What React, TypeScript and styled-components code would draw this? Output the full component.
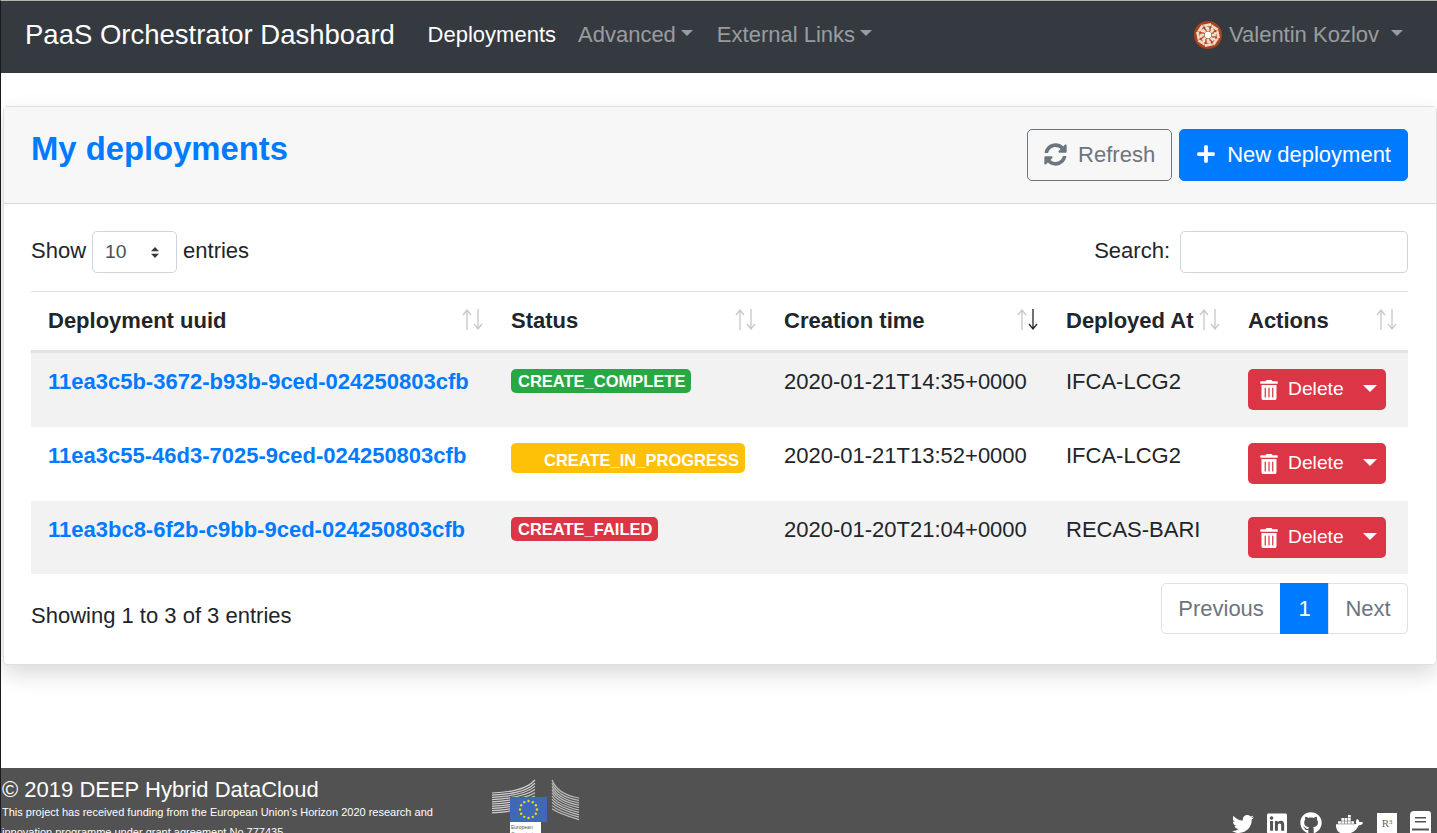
import React from 'react';
import styled, { createGlobalStyle } from 'styled-components';
import { FaSyncAlt, FaPlus, FaTrashAlt, FaTwitter, FaLinkedin, FaGithub, FaDocker } from 'react-icons/fa';

const GlobalStyle = createGlobalStyle`
  html, body {
    margin: 0;
    height: 833px;
    overflow: hidden;
    background: #fff;
  }
  body {
    font-family: "Liberation Sans", Arial, sans-serif;
    font-size: 22px;
    line-height: 1.5;
    color: #212529;
  }
  * { box-sizing: border-box; }
`;

const Page = styled.div`
  display: flex;
  flex-direction: column;
  height: 833px;
  border-top: 1px solid #b8b4ae;
  border-left: 1px solid #1a1a1a;
  overflow: hidden;
`;

const Navbar = styled.nav`
  display: flex;
  align-items: center;
  height: 72px;
  flex-shrink: 0;
  padding: 0 34px 5px 24px;
  background: #343a40;
`;

const Brand = styled.a`
  font-size: 27.5px;
  color: #fff;
  margin-right: 21.7px;
  white-space: nowrap;
`;

const NavLink = styled.a<{ $active?: boolean }>`
  display: inline-flex;
  align-items: center;
  padding: 0 11px;
  white-space: nowrap;
  color: ${(p) => (p.$active ? '#fff' : 'rgba(255, 255, 255, 0.5)')};
  & + & + & {
    margin-left: 2px;
  }
`;

const Caret = styled.span<{ $gap?: number; $size?: number }>`
  display: inline-block;
  margin-left: ${(p) => p.$gap ?? 5}px;
  margin-top: -3px;
  border-top: ${(p) => p.$size ?? 6}px solid currentColor;
  border-left: ${(p) => p.$size ?? 6}px solid transparent;
  border-right: ${(p) => p.$size ?? 6}px solid transparent;
`;

const NavRight = styled.div`
  margin-left: auto;
  display: flex;
  align-items: center;
`;

const UserName = styled.span`
  color: rgba(255, 255, 255, 0.5);
  display: inline-flex;
  align-items: center;
  white-space: nowrap;
`;

const AvatarSvg = styled.svg`
  width: 28px;
  height: 28px;
  margin-right: 7px;
`;

const Main = styled.main`
  flex: 1;
  padding: 33px 0 0 2px;
`;

const Card = styled.section`
  height: 559px;
  background: #fff;
  border: 1px solid rgba(0, 0, 0, 0.125);
  border-radius: 5px;
  box-shadow: 0 9px 22px rgba(0, 0, 0, 0.15);
`;

const CardHeader = styled.header`
  display: flex;
  justify-content: space-between;
  align-items: flex-start;
  height: 97px;
  padding: 22px 28px 0 27px;
  background: #f7f7f7;
  border-bottom: 1px solid rgba(0, 0, 0, 0.125);
`;

const Title = styled.h3`
  margin: 0;
  font-size: 32.8px;
  line-height: 40px;
  font-weight: 700;
  color: #007bff;
`;

const HeaderActions = styled.div`
  display: flex;
  gap: 7px;
`;

const Button = styled.button<{ $variant: 'outline' | 'primary' }>`
  display: inline-flex;
  align-items: center;
  gap: 11px;
  height: 52px;
  padding: 0 16px 2px;
  font: inherit;
  border-radius: 5px;
  border: 1px solid ${(p) => (p.$variant === 'primary' ? '#007bff' : '#6c757d')};
  background: ${(p) => (p.$variant === 'primary' ? '#007bff' : 'transparent')};
  color: ${(p) => (p.$variant === 'primary' ? '#fff' : '#6c757d')};
`;

const CardBody = styled.div`
  padding: 27px 28px 0 27px;
`;

const Controls = styled.div`
  display: flex;
  justify-content: space-between;
  align-items: center;
  height: 42px;
  margin-bottom: 18px;
`;

const ControlLabel = styled.label`
  display: flex;
  align-items: flex-start;
  gap: 6px;
  line-height: 40px;
`;

const FakeSelect = styled.div`
  display: flex;
  align-items: center;
  justify-content: space-between;
  width: 85px;
  height: 42px;
  padding: 0 17px 0 12px;
  font-size: 19.25px;
  color: #495057;
  border: 1px solid #ced4da;
  border-radius: 5px;
`;

const SearchInput = styled.input`
  width: 228px;
  height: 42px;
  margin-left: 4px;
  border: 1px solid #ced4da;
  border-radius: 5px;
`;

const Table = styled.table`
  width: 100%;
  table-layout: fixed;
  border-collapse: separate;
  border-spacing: 0;
`;

const HeadCell = styled.th`
  position: relative;
  height: 62px;
  padding: 0 17px 2px;
  text-align: left;
  font-weight: 700;
  white-space: nowrap;
  border-top: 1px solid #dee2e6;
  border-bottom: 3px solid #dee2e6;
`;

const SortIcon = styled.svg`
  position: absolute;
  top: 17px;
  right: 11px;
  width: 21px;
  height: 21px;
  overflow: visible;
`;

const Row = styled.tr<{ $striped?: boolean }>`
  height: 74px;
  background: ${(p) => (p.$striped ? '#f2f2f2' : '#fff')};
  & + & td {
    border-top-color: #dee2e6;
  }
  &:last-child {
    height: 73px;
  }
`;

const Cell = styled.td`
  padding: 11px 17px 0;
  vertical-align: top;
  white-space: nowrap;
  border-top: 1px solid transparent;
`;

const UuidLink = styled.a`
  font-weight: 700;
  color: #007bff;
`;

const Badge = styled.span<{ $tone: 'success' | 'warning' | 'danger'; $lead?: number }>`
  display: block;
  width: fit-content;
  margin-top: 4px;
  padding: 0 6px 0 ${(p) => p.$lead ?? 7}px;
  height: ${(p) => (p.$lead ? 30 : 24)}px;
  line-height: ${(p) => (p.$lead ? 34 : 24)}px;
  font-size: 16.5px;
  font-weight: 700;
  color: #fff;
  border-radius: 5px;
  background: ${(p) =>
    p.$tone === 'success' ? '#28a745' : p.$tone === 'warning' ? '#ffc107' : '#dc3545'};
`;

const DeleteGroup = styled.div`
  display: flex;
  align-items: center;
  justify-content: space-between;
  width: 138px;
  height: 41px;
  margin-top: 4px;
  padding: 0 9px 0 11px;
  font-size: 19.25px;
  color: #fff;
  background: #dc3545;
  border-radius: 5px;
`;

const DeleteLabel = styled.span`
  display: inline-flex;
  align-items: center;
  gap: 9px;
`;

const TableFooter = styled.div`
  display: flex;
  justify-content: space-between;
  align-items: flex-start;
  margin-top: 9px;
`;

const InfoText = styled.div`
  padding-top: 16px;
`;

const Pagination = styled.ul`
  display: flex;
  height: 51px;
  margin: 0;
  padding: 0;
  list-style: none;
`;

const PageItem = styled.li<{ $active?: boolean }>`
  display: flex;
  align-items: center;
  justify-content: center;
  min-width: ${(p) => (p.$active ? '49px' : '0')};
  padding: 0 16.3px;
  margin-left: -1px;
  color: ${(p) => (p.$active ? '#fff' : '#6c757d')};
  background: ${(p) => (p.$active ? '#007bff' : '#fff')};
  border: 1px solid ${(p) => (p.$active ? '#007bff' : '#dee2e6')};
  &:first-child {
    border-radius: 5px 0 0 5px;
  }
  &:last-child {
    border-radius: 0 5px 5px 0;
  }
`;

const Footer = styled.footer`
  display: flex;
  flex-shrink: 0;
  height: 65px;
  padding-left: 1px;
  background: #525252;
  color: #fff;
  overflow: hidden;
`;

const FooterText = styled.div`
  width: 488px;
  flex-shrink: 0;
`;

const Copyright = styled.div`
  font-size: 22px;
  line-height: 25px;
  margin-top: 9px;
`;

const FundingNote = styled.div`
  width: 440px;
  font-size: 11px;
  line-height: 20px;
`;

const EuSvg = styled.svg`
  width: 90px;
  height: 65px;
  margin-top: 10px;
  flex-shrink: 0;
`;

const Socials = styled.div`
  display: flex;
  align-items: flex-start;
  margin-left: auto;
  padding: 43px 6px 0 0;
`;

const SocialIcon = styled.span<{ $width: number; $gap?: number; $top?: number }>`
  display: flex;
  justify-content: center;
  width: ${(p) => p.$width}px;
  margin-left: ${(p) => p.$gap ?? 14}px;
  margin-top: ${(p) => p.$top ?? 0}px;
`;

const R3Box = styled.span`
  display: flex;
  align-items: center;
  justify-content: center;
  width: 20px;
  height: 20px;
  margin: 2px 0 0 14px;
  background: #fff;
  color: #6a6a6a;
  font-family: "Liberation Serif", serif;
  font-size: 11px;
  line-height: 1;
`;

const BookSvg = styled.svg`
  width: 21px;
  height: 24px;
  margin-left: 13px;
`;

const rows = [
  { uuid: '11ea3c5b-3672-b93b-9ced-024250803cfb', status: 'CREATE_COMPLETE', tone: 'success', time: '2020-01-21T14:35+0000', site: 'IFCA-LCG2' },
  { uuid: '11ea3c55-46d3-7025-9ced-024250803cfb', status: 'CREATE_IN_PROGRESS', tone: 'warning', lead: 33, time: '2020-01-21T13:52+0000', site: 'IFCA-LCG2' },
  { uuid: '11ea3bc8-6f2b-c9bb-9ced-024250803cfb', status: 'CREATE_FAILED', tone: 'danger', time: '2020-01-20T21:04+0000', site: 'RECAS-BARI' },
] as const;

const columns = [
  { label: 'Deployment uuid', width: 463 },
  { label: 'Status', width: 273 },
  { label: 'Creation time', width: 282, sorted: true },
  { label: 'Deployed At', width: 182 },
  { label: 'Actions', width: 177 },
];

function SortArrows({ sorted }: { sorted?: boolean }) {
  return (
    <SortIcon viewBox="0 0 21 21" fill="none" stroke="#212529" strokeWidth="1.3">
      <path d="M5 21 V1 M1 6 L5 1 L9 6" opacity="0.25" />
      <path d="M16 0 V20 M12 15 L16 20 L20 15" opacity={sorted ? 1 : 0.25} />
    </SortIcon>
  );
}

function Avatar() {
  const spokes = [0, 45, 90, 135, 180, 225, 270, 315];
  return (
    <AvatarSvg viewBox="0 0 28 28">
      <circle cx="14" cy="14" r="14" fill="#a8431a" />
      <circle cx="14" cy="14" r="3.4" fill="#fff" />
      {spokes.map((a) => (
        <g key={a} transform={`rotate(${a} 14 14)`}>
          <rect x="12.6" y="6.2" width="2.8" height="3.8" fill="#f3d9c8" />
          <path d="M8.5 3.8 L17 2 L17 5 L11 6 Z" fill="#f3d9c8" />
          <circle cx="18" cy="8" r="1.4" fill="#f8e8dd" />
        </g>
      ))}
    </AvatarSvg>
  );
}

function EuLogo() {
  const stripes = Array.from({ length: 10 }, (_, i) => i);
  const stars = Array.from({ length: 12 }, (_, i) => (i * Math.PI) / 6);
  return (
    <EuSvg viewBox="0 0 90 65">
      {stripes.map((i) => (
        <path key={i} d={`M2 ${15 + i * 2.2} C 20 ${14 + i * 2.2}, 36 ${12 + i * 2}, 45 ${2 + i * 3.2}`} stroke="#cfcfcf" strokeWidth="1.2" fill="none" />
      ))}
      {stripes.map((i) => (
        <path key={`r${i}`} d={`M62 ${2 + i * 3.2} C 66 ${12 + i * 2.4}, 76 ${18 + i * 2.2}, 89 ${20 + i * 2.4}`} stroke="#bdbdbd" strokeWidth="1.2" fill="none" />
      ))}
      <rect x="20" y="19" width="37" height="25" fill="#3f68b5" />
      <rect x="20" y="44" width="31" height="21" fill="#fff" />
      {stars.map((t) => (
        <circle key={t} cx={38.5 + Math.cos(t) * 8.5} cy={31.5 + Math.sin(t) * 8.5} r="1.2" fill="#f5d90a" />
      ))}
      <text x="21" y="51" fontSize="5" fill="#555" fontFamily="Liberation Sans, sans-serif">European</text>
      <text x="21" y="58" fontSize="5" fill="#555" fontFamily="Liberation Sans, sans-serif">Commission</text>
    </EuSvg>
  );
}

function SelectArrows() {
  return (
    <svg width="8" height="11" viewBox="0 0 8 11">
      <path d="M4 0 L8 4.3 H0 Z M4 11 L0 6.7 H8 Z" fill="#343a40" />
    </svg>
  );
}

export default function App() {
  return (
    <>
      <GlobalStyle />
      <Page>
        <Navbar>
          <Brand>PaaS Orchestrator Dashboard</Brand>
          <NavLink $active>Deployments</NavLink>
          <NavLink>Advanced<Caret /></NavLink>
          <NavLink>External Links<Caret /></NavLink>
          <NavRight>
            <Avatar />
            <UserName>Valentin Kozlov<Caret $gap={12} /></UserName>
          </NavRight>
        </Navbar>

        <Main>
          <Card>
            <CardHeader>
              <Title>My deployments</Title>
              <HeaderActions>
                <Button $variant="outline"><FaSyncAlt size={23} />Refresh</Button>
                <Button $variant="primary"><FaPlus size={20} />New deployment</Button>
              </HeaderActions>
            </CardHeader>
            <CardBody>
              <Controls>
                <ControlLabel>
                  Show
                  <FakeSelect>10<SelectArrows /></FakeSelect>
                  entries
                </ControlLabel>
                <ControlLabel>
                  Search:
                  <SearchInput />
                </ControlLabel>
              </Controls>

              <Table>
                <colgroup>
                  {columns.map((c) => (
                    <col key={c.label} width={c.width} />
                  ))}
                </colgroup>
                <thead>
                  <tr>
                    {columns.map((c) => (
                      <HeadCell key={c.label}>
                        {c.label}
                        <SortArrows sorted={c.sorted} />
                      </HeadCell>
                    ))}
                  </tr>
                </thead>
                <tbody>
                  {rows.map((r, i) => (
                    <Row key={r.uuid} $striped={i % 2 === 0}>
                      <Cell><UuidLink>{r.uuid}</UuidLink></Cell>
                      <Cell>
                        <Badge $tone={r.tone} $lead={'lead' in r ? r.lead : undefined}>{r.status}</Badge>
                      </Cell>
                      <Cell>{r.time}</Cell>
                      <Cell>{r.site}</Cell>
                      <Cell>
                        <DeleteGroup>
                          <DeleteLabel><FaTrashAlt size={20} />Delete</DeleteLabel>
                          <Caret $size={7} />
                        </DeleteGroup>
                      </Cell>
                    </Row>
                  ))}
                </tbody>
              </Table>

              <TableFooter>
                <InfoText>Showing 1 to 3 of 3 entries</InfoText>
                <Pagination>
                  <PageItem>Previous</PageItem>
                  <PageItem $active>1</PageItem>
                  <PageItem>Next</PageItem>
                </Pagination>
              </TableFooter>
            </CardBody>
          </Card>
        </Main>

        <Footer>
          <FooterText>
            <Copyright>© 2019 DEEP Hybrid DataCloud</Copyright>
            <FundingNote>
              This project has received funding from the European Union’s Horizon 2020 research and innovation programme under grant agreement No 777435
            </FundingNote>
          </FooterText>
          <EuLogo />
          <Socials>
            <SocialIcon $width={22} $top={2}><FaTwitter size={22} /></SocialIcon>
            <SocialIcon $width={20} $top={1} $gap={13}><FaLinkedin size={23} /></SocialIcon>
            <SocialIcon $width={22} $top={1} $gap={13}><FaGithub size={22} /></SocialIcon>
            <SocialIcon $width={27}><FaDocker size={27} /></SocialIcon>
            <R3Box>R³</R3Box>
            <BookSvg viewBox="0 0 21 24">
              <path fillRule="evenodd" d="M4 0 H18 A3 3 0 0 1 21 3 V24 H0 V4 A4 4 0 0 1 4 0 Z M5 6 V7.6 H16 V6 Z M5 10 V11.6 H16 V10 Z M2 17.5 V19.5 H19 V17.5 Z" fill="#fff" />
            </BookSvg>
          </Socials>
        </Footer>
      </Page>
    </>
  );
}
